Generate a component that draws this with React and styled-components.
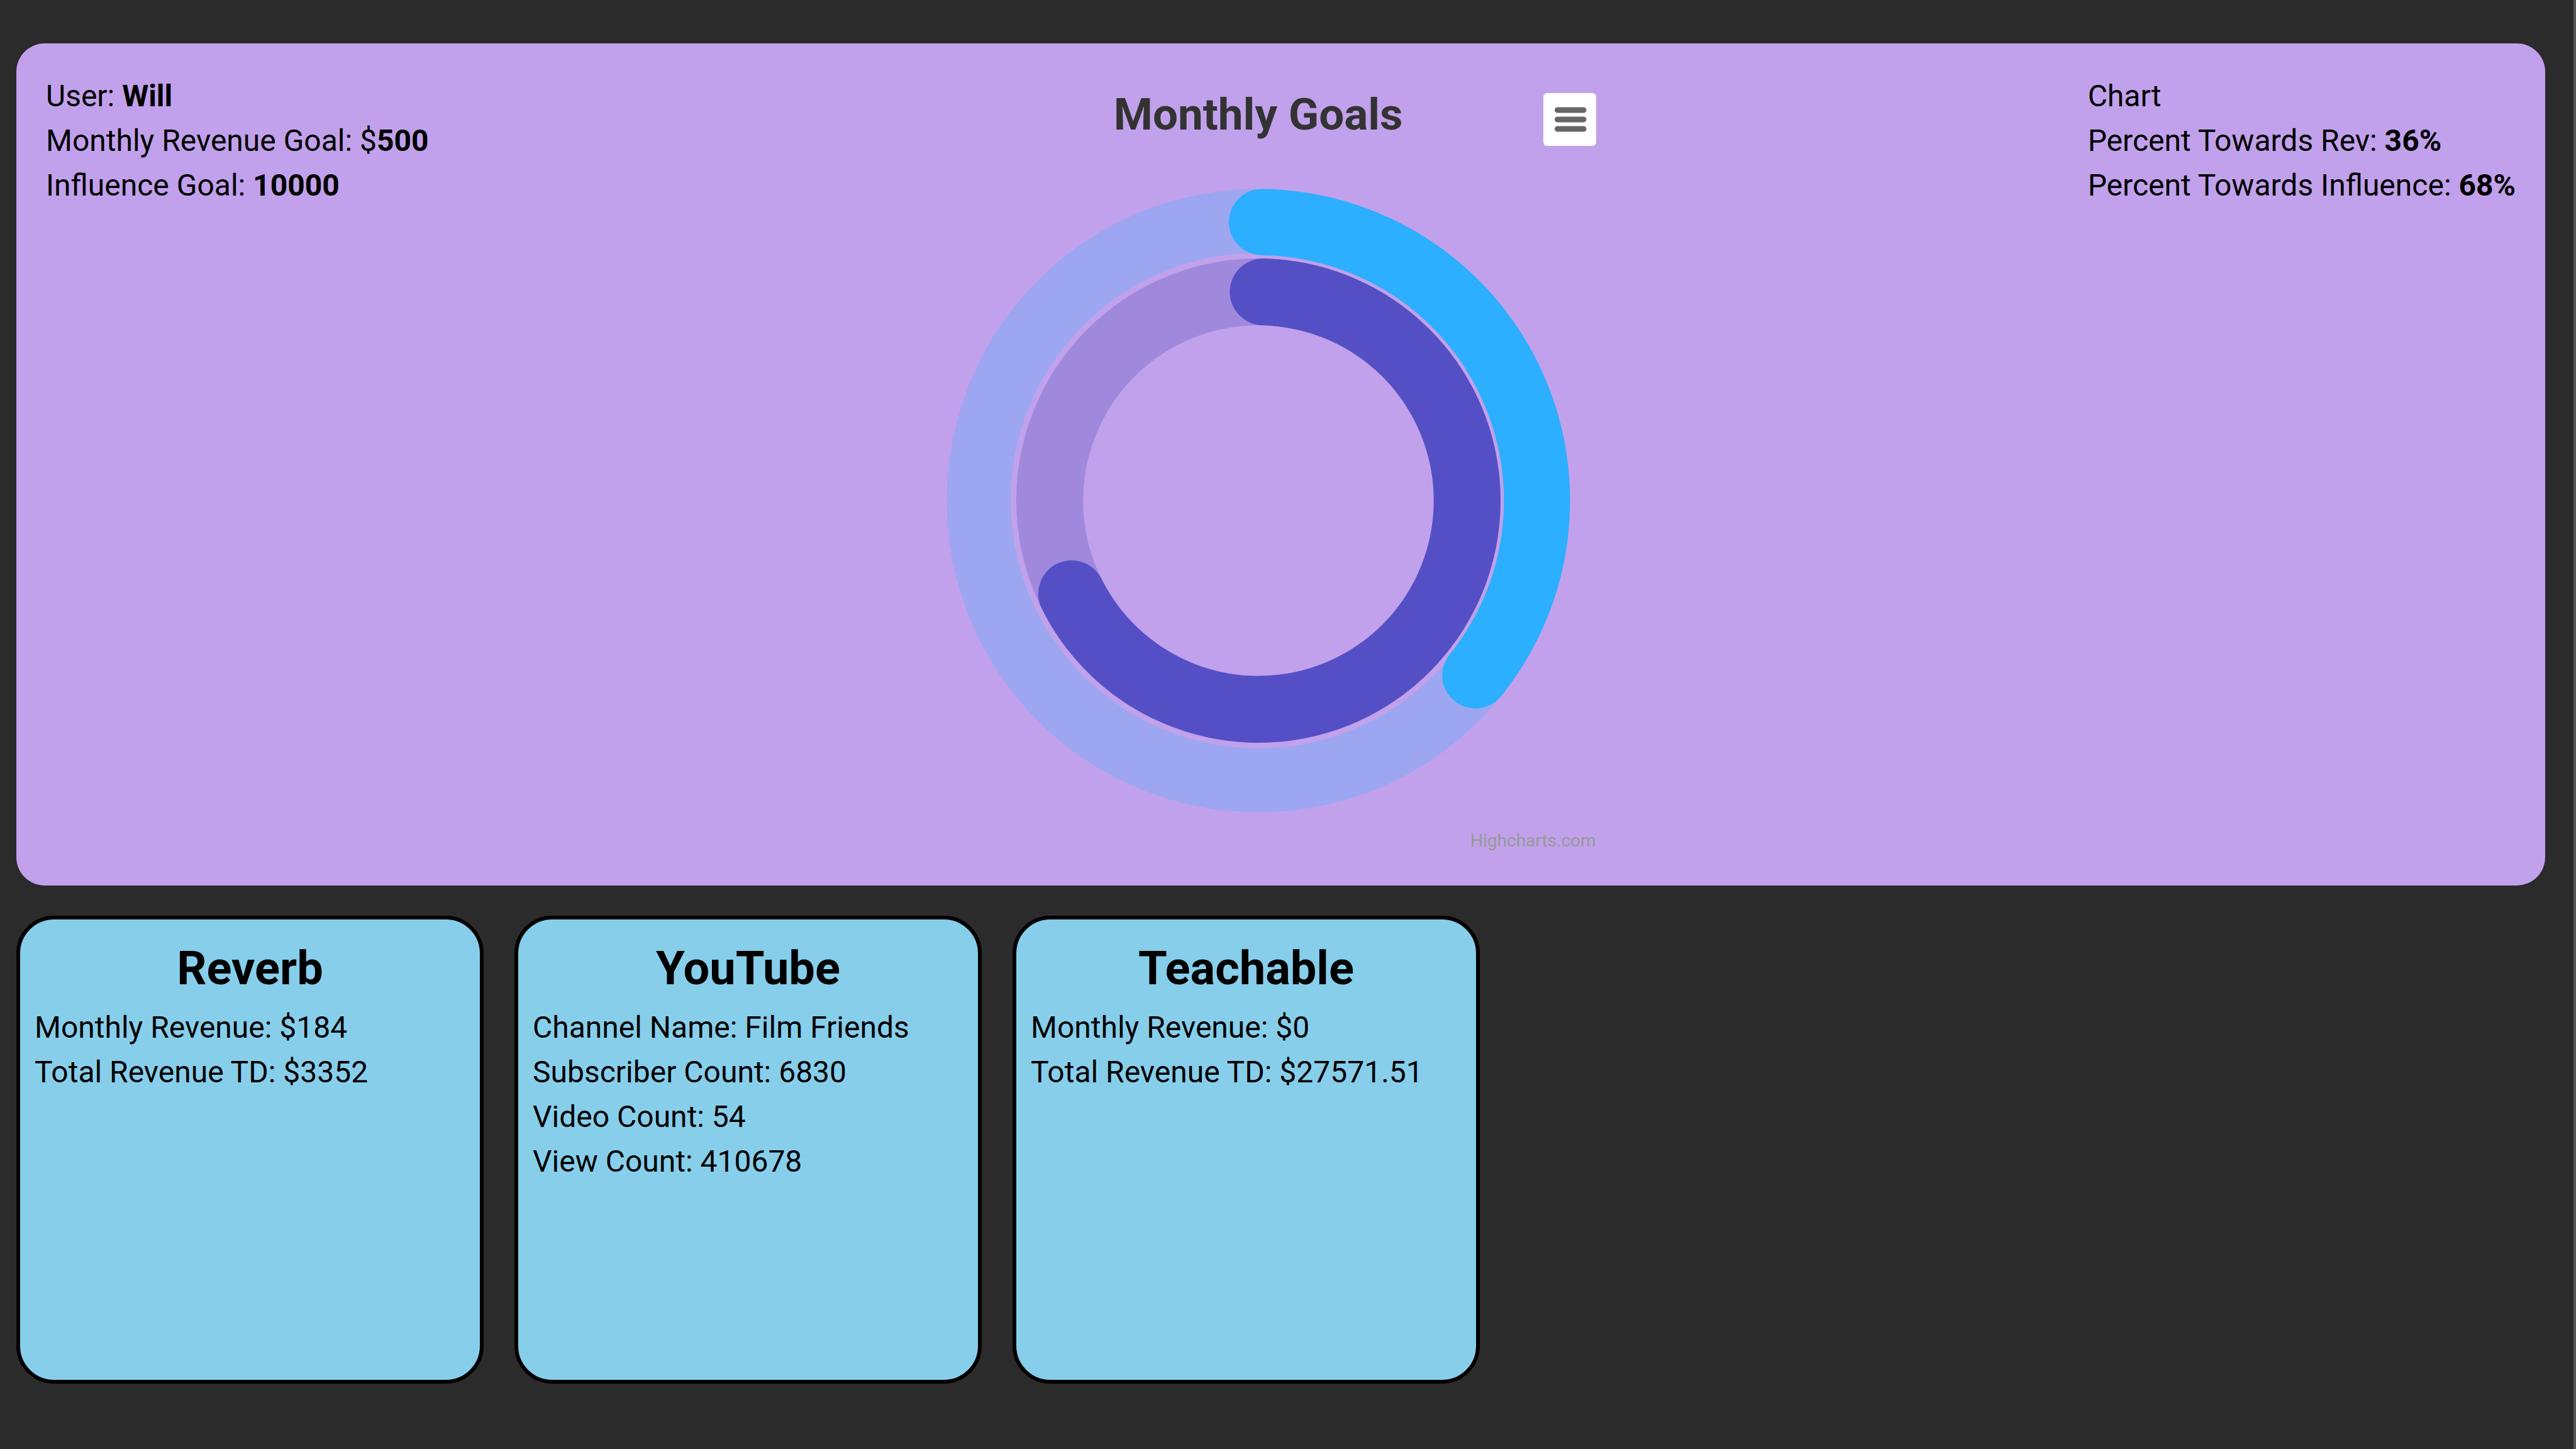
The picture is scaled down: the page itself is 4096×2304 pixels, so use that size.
import React from "react";
import styled, { createGlobalStyle } from "styled-components";

const GlobalStyle = createGlobalStyle`
  *, *::before, *::after { box-sizing: border-box; }
  body {
    margin: 0;
    background: #2b2b2b;
    color: #000;
    font-family: Roboto, "Liberation Sans", sans-serif;
    font-size: 48px;
    line-height: 71px;
  }
`;

const Page = styled.main`
  display: flex;
  flex-direction: column;
  gap: 48px;
  min-height: 100vh;
  padding: 69px 45px 69px 26px;
  border-right: 4px solid #575757;
`;

const Panel = styled.section`
  display: flex;
  flex-wrap: wrap;
  justify-content: space-between;
  align-items: flex-start;
  padding: 48px 47px;
  border-radius: 45px;
  background: #c1a1eb;
`;

const Line = styled.p`
  margin: 0;
`;

const Chart = styled.figure`
  display: flex;
  flex-direction: column;
  align-items: center;
  width: 1074px;
  max-width: 100%;
  margin: 0;
  padding: 23px 0 6px;
`;

const ChartHeader = styled.div`
  display: grid;
  grid-template-columns: 84px 1fr 84px;
  width: 100%;
  height: 92px;
  margin-bottom: 64px;
`;

const ChartTitle = styled.h2`
  grid-column: 2;
  margin: 0;
  color: #333;
  font-size: 71px;
  line-height: 84px;
  text-align: center;
`;

const MenuButton = styled.button`
  align-self: end;
  width: 84px;
  height: 84px;
  padding: 0;
  border: 0;
  border-radius: 6px;
  background: #fff;
  cursor: pointer;

  svg { display: block; }
`;

const Rings = styled.svg`
  display: block;
  width: 1000px;
  max-width: 100%;
`;

const Credits = styled.a`
  align-self: flex-end;
  margin-top: 24px;
  color: #999;
  font-size: 28px;
  line-height: 34px;
  text-decoration: none;
`;

const Cards = styled.div`
  display: flex;
  flex-wrap: wrap;
  gap: 49px;
`;

const CardBox = styled.article`
  width: 743px;
  min-height: 744px;
  padding: 34px 23px;
  border: 6px solid #000;
  border-radius: 60px;
  background: #87ceeb;
`;

const CardTitle = styled.h2`
  margin: 0 0 14px;
  font-size: 74px;
  line-height: 88px;
  text-align: center;
`;

const GAUGES = [
  { name: "Revenue", percent: 36, color: "#2caffe", track: "#9da6f0", outer: 495.5, inner: 390.3, trackInner: 394 },
  { name: "Influence", percent: 68, color: "#544fc5", track: "#a089dd", outer: 385, inner: 278.8, trackInner: 278.8 },
];

const CARDS = [
  { title: "Reverb", lines: ["Monthly Revenue: $184", "Total Revenue TD: $3352"] },
  {
    title: "YouTube",
    lines: [
      "Channel Name: Film Friends",
      "Subscriber Count: 6830",
      "Video Count: 54",
      "View Count: 410678",
    ],
  },
  { title: "Teachable", lines: ["Monthly Revenue: $0", "Total Revenue TD: $27571.51"] },
];

// Rounded arc, clockwise from twelve o'clock; the cap centres sit slightly inside the value range.
function arcPath({ percent, outer, inner }) {
  const r = (outer + inner) / 2;
  const half = (outer - inner) / 2;
  const inset = Math.asin(half / r) - half / outer;
  const start = inset;
  const end = (percent / 100) * 2 * Math.PI - inset;
  const point = (a) => `${r * Math.sin(a)} ${-r * Math.cos(a)}`;
  return `M ${point(start)} A ${r} ${r} 0 ${end - start > Math.PI ? 1 : 0} 1 ${point(end)}`;
}

function Gauge(props) {
  const { color, track, outer, inner, trackInner } = props;
  return (
    <g fill="none">
      <circle r={(outer + trackInner) / 2} stroke={track} strokeWidth={outer - trackInner} />
      <path d={arcPath(props)} stroke={color} strokeWidth={outer - inner} strokeLinecap="round" />
    </g>
  );
}

function GoalsChart() {
  return (
    <Chart>
      <ChartHeader>
        <ChartTitle>Monthly Goals</ChartTitle>
        <MenuButton type="button" aria-label="View chart menu">
          <svg viewBox="0 0 84 84" stroke="#666" strokeWidth="9" strokeLinecap="round" aria-hidden="true">
            <path d="M22.5 27H64M22.5 42H64M22.5 57H64" />
          </svg>
        </MenuButton>
      </ChartHeader>
      <Rings viewBox="-500 -500 1000 1000" role="img" aria-label="Monthly goals">
        {GAUGES.map((gauge) => (
          <Gauge key={gauge.name} {...gauge} />
        ))}
      </Rings>
      <Credits href="https://www.highcharts.com">Highcharts.com</Credits>
    </Chart>
  );
}

export default function App() {
  return (
    <>
      <GlobalStyle />
      <Page>
        <Panel>
          <div>
            <Line>User: <b>Will</b></Line>
            <Line>Monthly Revenue Goal: $<b>500</b></Line>
            <Line>Influence Goal: <b>10000</b></Line>
          </div>
          <GoalsChart />
          <div>
            <Line>Chart</Line>
            <Line>Percent Towards Rev: <b>36%</b></Line>
            <Line>Percent Towards Influence: <b>68%</b></Line>
          </div>
        </Panel>
        <Cards>
          {CARDS.map(({ title, lines }) => (
            <CardBox key={title}>
              <CardTitle>{title}</CardTitle>
              {lines.map((line) => (
                <Line key={line}>{line}</Line>
              ))}
            </CardBox>
          ))}
        </Cards>
      </Page>
    </>
  );
}
